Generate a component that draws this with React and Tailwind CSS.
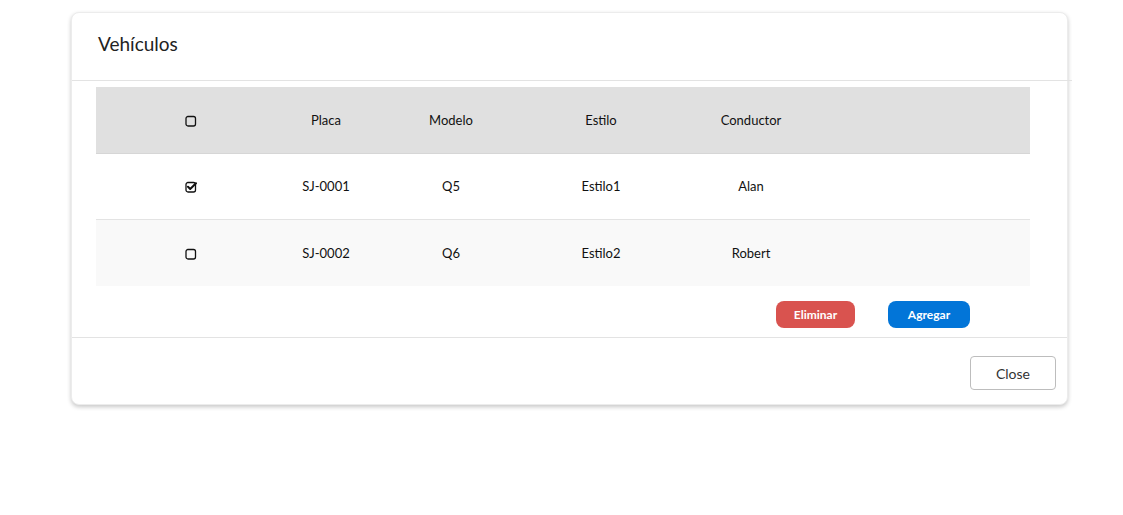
import React from 'react';

const font = { fontFamily: '"Source Sans Pro", Lato, "Noto Sans", sans-serif' };

function Box({ checked }) {
  return (
    <svg width="12" height="12" viewBox="0 0 12 12" className="inline-block">
      <rect x="1" y="1.5" width="9.5" height="9.5" rx="2" fill="none" stroke="#111" strokeWidth="1.3" />
      {checked && (
        <path d="M3 5.8 L5.2 8 L11 2.2" fill="none" stroke="#111" strokeWidth="2" strokeLinecap="round" strokeLinejoin="round" />
      )}
    </svg>
  );
}

const rows = [
  { checked: true, placa: 'SJ-0001', modelo: 'Q5', estilo: 'Estilo1', conductor: 'Alan' },
  { checked: false, placa: 'SJ-0002', modelo: 'Q6', estilo: 'Estilo2', conductor: 'Robert' },
];

function Cells({ a, b, c, d, e }) {
  return (
    <>
      <div className="w-[190px] flex justify-center">{a}</div>
      <div className="w-[80px] text-center">{b}</div>
      <div className="w-[170px] text-center">{c}</div>
      <div className="w-[130px] text-center">{d}</div>
      <div className="w-[170px] text-center">{e}</div>
      <div className="flex-1" />
    </>
  );
}

export default function App() {
  return (
    <div className="min-h-screen bg-white pt-[12px] text-[#111]" style={font}>
      <div className="ml-[71px] w-[997px] bg-white rounded-lg shadow-[0_2px_4px_rgba(0,0,0,0.22)] border border-[#ececec]">
        {/* header */}
        <div className="h-[68px] flex items-center pl-[26px] pb-[5px] border-b border-[#e3e3e3] mr-[-5px]">
          <h2 className="text-[19px] text-[#222]">Vehículos</h2>
        </div>

        {/* table */}
        <div className="mt-[6px] ml-[24px] w-[934px] text-[13px]">
          <div className="h-[67px] flex items-center pt-[1px] bg-[#e0e0e0] border-b border-[#d6d6d6]">
            <Cells a={<Box />} b="Placa" c="Modelo" d="Estilo" e="Conductor" />
          </div>
          {rows.map((r, i) => (
            <div
              key={r.placa}
              className={`h-[66px] flex items-center pt-[1px] ${i === 0 ? 'bg-white border-b border-[#e3e3e3]' : 'bg-[#f9f9f9]'}`}
            >
              <Cells a={<Box checked={r.checked} />} b={r.placa} c={r.modelo} d={r.estilo} e={r.conductor} />
            </div>
          ))}
        </div>

        {/* actions */}
        <div className="h-[51px] flex items-start pt-[15px] pl-[704px] gap-[33px]">
          <button className="w-[79px] h-[27px] rounded-lg bg-[#d9534f] text-white text-[12px] font-bold">Eliminar</button>
          <button className="w-[82px] h-[27px] rounded-lg bg-[#0275d8] text-white text-[12px] font-bold">Agregar</button>
        </div>

        {/* footer */}
        <div className="h-[67px] border-t border-[#e3e3e3] flex justify-end items-start pt-[18px] pr-[11px]">
          <button className="w-[86px] h-[34px] rounded border border-[#bdbdbd] bg-white text-[14px] text-[#333]">Close</button>
        </div>
      </div>
    </div>
  );
}
